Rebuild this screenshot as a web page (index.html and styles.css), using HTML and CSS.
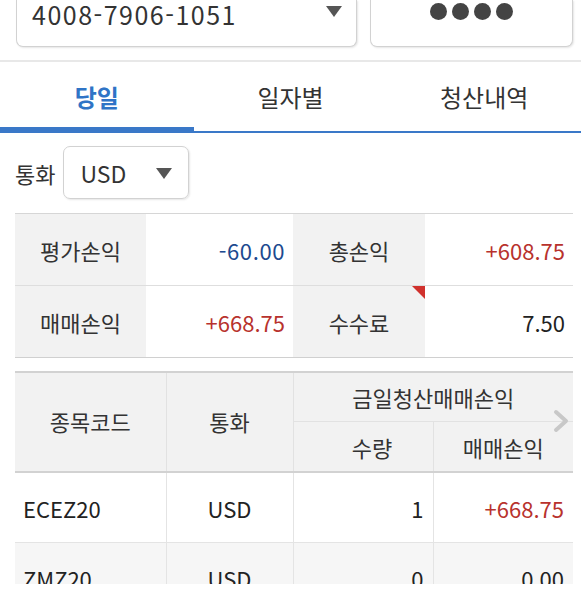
FILE: index.html
```html
<!DOCTYPE html>
<html lang="ko">
<head>
<meta charset="utf-8">
<link rel="stylesheet" href="styles.css">
</head>
<body>
<div class="page">
  <div class="top">
    <div class="acct">
      <span class="acct-no">4008-7906-1051</span>
      <span class="caret"></span>
    </div>
    <div class="pw">
      <span class="dot"></span><span class="dot"></span><span class="dot"></span><span class="dot"></span>
    </div>
  </div>

  <div class="tabs">
    <div class="tab active">당일</div>
    <div class="tab">일자별</div>
    <div class="tab">청산내역</div>
  </div>

  <div class="cur-row">
    <span class="cur-label">통화</span>
    <div class="select">
      <span class="select-val">USD</span>
      <span class="caret"></span>
    </div>
  </div>

  <div class="summary">
    <div class="s-label">평가손익</div>
    <div class="s-val blue">-60.00</div>
    <div class="s-label">총손익</div>
    <div class="s-val red">+608.75</div>
    <div class="s-label">매매손익</div>
    <div class="s-val red">+668.75</div>
    <div class="s-label">수수료<span class="flag"></span></div>
    <div class="s-val">7.50</div>
  </div>

  <div class="detail-wrap">
    <table class="detail">
      <colgroup>
        <col class="c1"><col class="c2"><col class="c3"><col class="c4">
      </colgroup>
      <thead>
        <tr class="h1">
          <th rowspan="2">종목코드</th>
          <th rowspan="2">통화</th>
          <th colspan="2" class="grp">금일청산매매손익</th>
        </tr>
        <tr class="h2">
          <th class="qty-h">수량</th>
          <th>매매손익</th>
        </tr>
      </thead>
      <tbody>
        <tr>
          <td class="code">ECEZ20</td>
          <td class="center">USD</td>
          <td class="num">1</td>
          <td class="num red">+668.75</td>
        </tr>
        <tr class="alt">
          <td class="code">ZMZ20</td>
          <td class="center">USD</td>
          <td class="num">0</td>
          <td class="num">0.00</td>
        </tr>
      </tbody>
    </table>
    <svg class="chev" width="16" height="24" viewBox="0 0 16 24"><polyline points="3,3 13,12 3,21" fill="none" stroke="#c8c8c8" stroke-width="4" stroke-linecap="round" stroke-linejoin="round"/></svg>
  </div>
</div>
</body>
</html>
```

FILE: styles.css
```css
html, body {
  margin: 0;
  padding: 0;
  background: #fff;
}
body {
  font-family: "Noto Sans CJK KR", "Noto Sans", sans-serif;
  color: #333;
}
.page {
  width: 581px;
  height: 584px;
  overflow: hidden;
}

/* top account bar */
.top {
  display: flex;
  gap: 13px;
  padding: 0 8px 13px 16px;
  border-bottom: 2px solid #e8e8e8;
}
.acct, .pw {
  box-sizing: border-box;
  height: 47px;
  border: 1px solid #d2d2d2;
  border-top: none;
  border-radius: 0 0 7px 7px;
  box-shadow: 1px 1px 2px rgba(0,0,0,0.10);
  background: #fff;
}
.acct {
  width: 341px;
  display: flex;
  align-items: flex-start;
  padding: 1px 14px 0 15px;
}
.acct-no {
  font-size: 25px;
  line-height: 27px;
  color: #333;
  letter-spacing: 1.5px;
}
.caret {
  width: 0;
  height: 0;
  border-left: 8.5px solid transparent;
  border-right: 8.5px solid transparent;
  border-top: 11px solid #555;
}
.acct .caret {
  margin-left: auto;
  margin-top: 5px;
}
.pw {
  width: 203px;
  display: flex;
  justify-content: center;
  gap: 5px;
  padding-top: 3px;
}
.dot {
  width: 17px;
  height: 17px;
  border-radius: 50%;
  background: #444;
}

/* tabs */
.tabs {
  display: flex;
  height: 71px;
  border-bottom: 2px solid #3a78c8;
  box-sizing: border-box;
}
.tab {
  flex: 1;
  display: flex;
  justify-content: center;
  align-items: center;
  padding-bottom: 1px;
  font-size: 24px;
  color: #333;
  position: relative;
}
.tab.active {
  color: #2f74c6;
  font-weight: bold;
}
.tab.active::after {
  content: "";
  position: absolute;
  left: 0;
  right: 0;
  bottom: -2px;
  height: 6px;
  background: #3a78c8;
}

/* currency row */
.cur-row {
  display: flex;
  align-items: center;
  gap: 8px;
  padding: 13px 0 14px 15px;
}
.cur-label {
  font-size: 22px;
  color: #333;
}
.select {
  box-sizing: border-box;
  width: 126px;
  height: 53px;
  border: 1px solid #d2d2d2;
  border-radius: 7px;
  box-shadow: 1px 1px 2px rgba(0,0,0,0.10);
  display: flex;
  align-items: center;
  padding: 0 16px 0 16px;
}
.select-val {
  font-size: 23px;
  color: #333;
}
.select .caret {
  margin-left: auto;
  margin-top: 1px;
}

/* summary */
.summary {
  margin-left: 15px;
  width: 558px;
  display: grid;
  grid-template-columns: 131px 147px 132px 148px;
  grid-auto-rows: 72px;
  border-top: 1px solid #d6d6d6;
}
.summary > div {
  box-sizing: border-box;
  display: flex;
  align-items: center;
  font-size: 22px;
  border-bottom: 1px solid #dedede;
}
.summary > div:nth-last-child(-n+4) {
  border-bottom-color: #d0d0d0;
}
.s-label {
  background: #f2f2f2;
  justify-content: center;
  color: #333;
  position: relative;
}
.s-val {
  justify-content: flex-end;
  padding-right: 8px;
  color: #222;
}
.summary > .blue { color: #1d4a8f; letter-spacing: 0.6px; }
.summary > .red { color: #b8322d; }
.flag {
  position: absolute;
  top: 0;
  right: 0;
  width: 0;
  height: 0;
  border-top: 13px solid #d0312d;
  border-left: 13px solid transparent;
}

/* detail table */
.detail-wrap {
  position: relative;
  margin-top: 13px;
  padding-left: 15px;
}
.detail {
  border-collapse: collapse;
  table-layout: fixed;
  width: 558px;
  font-size: 22px;
}
.c1 { width: 151px; }
.c2 { width: 127px; }
.c3 { width: 140px; }
.c4 { width: 140px; }
.detail thead tr.h1 th {
  border-top: 2px solid #d2d2d2;
}
.detail th {
  background: #f2f2f2;
  font-weight: normal;
  color: #333;
  padding: 0;
  border-left: 1px solid #e2e2e2;
  border-right: 1px solid #e2e2e2;
}
.detail th:first-child { border-left: none; }
.detail tr.h1 th { height: 48px; }
.detail tr.h1 th[rowspan] { border-bottom: 2px solid #d2d2d2; padding-bottom: 2px; }
.detail tr.h1 th.grp { border-bottom: 1px solid #e2e2e2; border-right: none; }
.detail tr.h2 th {
  height: 49px;
  border-bottom: 2px solid #d2d2d2;
}
.detail tr.h2 th:last-child { border-right: none; }
.detail th.qty-h { padding-left: 18px; }
.detail td {
  height: 69px;
  padding: 0;
  border-bottom: 1px solid #e4e4e4;
  border-left: 1px solid #e4e4e4;
  border-right: 1px solid #e4e4e4;
  color: #222;
}
.detail td:first-child { border-left: none; }
.detail td:last-child { border-right: none; }
.detail tr.alt td { background: #f6f6f6; }
.detail td.code { padding-left: 8px; }
.detail td.center { text-align: center; }
.detail td.num { text-align: right; padding-right: 9px; }
.detail td.red { color: #b8322d; }
.chev {
  position: absolute;
  right: 12px;
  top: 38px;
}
```
